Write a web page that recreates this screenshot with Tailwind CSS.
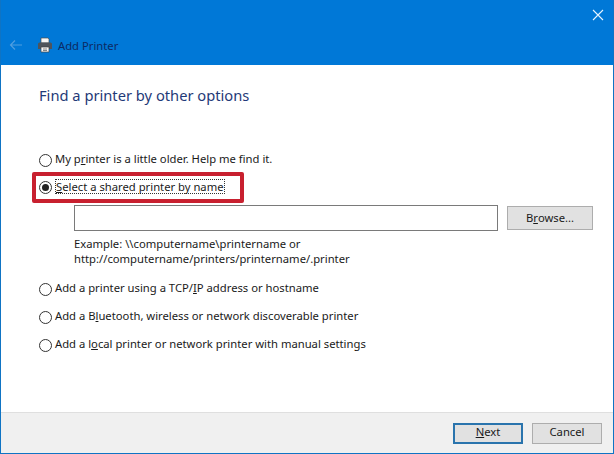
<!DOCTYPE html>
<html lang="en">
<head>
<meta charset="UTF-8">
<title>Add Printer</title>
<script src="https://cdn.jsdelivr.net/npm/@tailwindcss/browser@4"></script>
</head>
<body class="overflow-hidden bg-white">
<div class="relative flex h-[454px] w-[614px] flex-col border-x border-b border-[#0f74c4] font-['Noto_Sans',sans-serif] text-[11.25px] text-[#1a1a1a]">
  <!-- Title bar -->
  <div class="flex h-[65px] shrink-0 flex-col bg-[#0078d7]">
    <div class="flex h-[30px] justify-end pr-[9px] pt-[9px]">
      <svg width="12" height="12" viewBox="0 0 12 12" fill="none" stroke="#e6f4ff" stroke-width="1.1"><path d="M1 1l10 10M11 1L1 11"/></svg>
    </div>
    <div class="flex items-center pt-[7px]">
      <svg class="ml-[8px]" width="13" height="12" viewBox="0 0 13 12" fill="none" stroke="#4f9ee0" stroke-width="1.2"><path d="M13 6H1.500M6 1.500L1.500 6 6 10.500"/></svg>
      <svg class="ml-[15px]" width="16" height="16" viewBox="0 0 16 16">
        <path d="M4 1h7l1 1v4H4z" fill="#f6f6f6" stroke="#4a4a4a" stroke-width=".7"/>
        <path d="M1 7q0-1.500 1.500-1.500h11Q15 5.500 15 7v5h-3V10H4v2H1z" fill="#4f545b"/>
        <path d="M4 10h8v5H4z" fill="#f6f6f6" stroke="#444" stroke-width=".7"/>
        <path d="M6 12h4M6 13.500h4" stroke="#555" stroke-width=".7"/>
      </svg>
      <span class="ml-[5px] mt-[2px] text-[11.25px] leading-none text-[#0c2a63]">Add Printer</span>
    </div>
  </div>

  <!-- Content -->
  <div class="flex min-h-0 flex-1 flex-col pl-[38px]">
    <h1 class="mt-[19px] text-[14.7px] leading-[22px] font-normal text-[#1f3a78]">Find a printer by other options</h1>

    <div class="mt-[44px] flex h-[20px] items-center">
      <span class="h-[13px] w-[13px] rounded-full border border-[#333] bg-white"></span>
      <span class="mb-[2px] ml-[3px]">My p<u>r</u>inter is a little older. Help me find it.</span>
    </div>

    <div class="mt-[7px] flex h-[20px] items-center">
      <span class="flex h-[13px] w-[13px] items-center justify-center rounded-full border border-[#333] bg-white">
        <span class="h-[7px] w-[7px] rounded-full bg-[#222]"></span>
      </span>
      <span class="mb-[2px] ml-[3px] border border-dotted border-[#333] leading-[13px]"><u>S</u>elect a shared printer by name</span>
    </div>

    <div class="ml-[35px] mt-[8px] flex items-center">
      <div class="h-[26px] w-[424px] border border-[#7a7a7a] bg-white"></div>
      <div class="ml-[9px] flex h-[24px] w-[86px] items-center justify-center border border-[#adadad] bg-[#e1e1e1]">B<u>r</u>owse...</div>
    </div>

    <p class="ml-[35px] mt-[5px] leading-[15px]">Example: \\computername\printername or<br>http://computername/printers/printername/.printer</p>

    <div class="mt-[13px] flex h-[20px] items-center">
      <span class="h-[13px] w-[13px] rounded-full border border-[#333] bg-white"></span>
      <span class="mb-[2px] ml-[3px]">Add a printer using a TCP/<u>I</u>P address or hostname</span>
    </div>
    <div class="mt-[8px] flex h-[20px] items-center">
      <span class="h-[13px] w-[13px] rounded-full border border-[#333] bg-white"></span>
      <span class="mb-[2px] ml-[3px]">Add a B<u>l</u>uetooth, wireless or network discoverable printer</span>
    </div>
    <div class="mt-[8px] flex h-[20px] items-center">
      <span class="h-[13px] w-[13px] rounded-full border border-[#333] bg-white"></span>
      <span class="mb-[2px] ml-[3px]">Add a l<u>o</u>cal printer or network printer with manual settings</span>
    </div>
  </div>

  <!-- Footer -->
  <div class="flex h-[41px] shrink-0 items-center justify-end gap-[9px] border-t border-[#dfdfdf] bg-[#f0f0f0] pr-[11px]">
    <div class="flex h-[21px] w-[70px] items-center justify-center border-2 border-[#2a74ad] bg-[#e1e1e1] pb-[1px]"><span><u>N</u>ext</span></div>
    <div class="flex h-[21px] w-[70px] items-center justify-center border border-[#adadad] bg-[#e1e1e1] pb-[1px]">Cancel</div>
  </div>

  <!-- Red annotation -->
  <div class="absolute left-[31px] top-[172px] h-[31px] w-[212px] rounded-[2px] border-[4px] border-[#c8202f]"></div>
</div>
</body>
</html>
